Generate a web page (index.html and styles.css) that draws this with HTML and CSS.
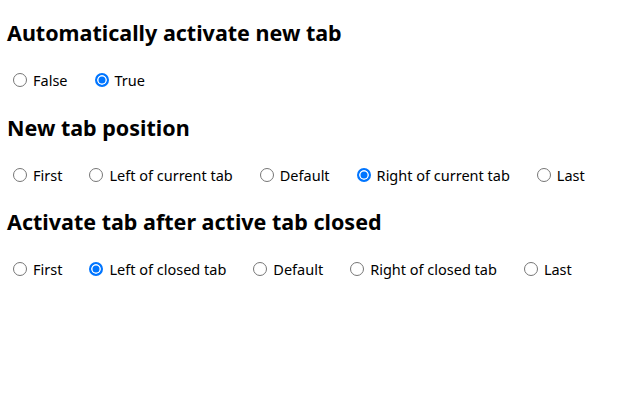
FILE: index.html
```html
<!DOCTYPE html>
<html>
<head>
<meta charset="utf-8">
<link rel="stylesheet" href="styles.css">
</head>
<body>
<main class="page">
  <section class="group">
    <h2 class="title">Automatically activate new tab</h2>
    <div class="options">
      <label class="opt"><input type="radio" name="activate"><span>False</span></label>
      <label class="opt"><input type="radio" name="activate" checked><span>True</span></label>
    </div>
  </section>
  <section class="group">
    <h2 class="title">New tab position</h2>
    <div class="options">
      <label class="opt"><input type="radio" name="pos"><span>First</span></label>
      <label class="opt"><input type="radio" name="pos"><span>Left of current tab</span></label>
      <label class="opt"><input type="radio" name="pos"><span>Default</span></label>
      <label class="opt"><input type="radio" name="pos" checked><span>Right of current tab</span></label>
      <label class="opt"><input type="radio" name="pos"><span>Last</span></label>
    </div>
  </section>
  <section class="group">
    <h2 class="title">Activate tab after active tab closed</h2>
    <div class="options">
      <label class="opt"><input type="radio" name="after"><span>First</span></label>
      <label class="opt"><input type="radio" name="after" checked><span>Left of closed tab</span></label>
      <label class="opt"><input type="radio" name="after"><span>Default</span></label>
      <label class="opt"><input type="radio" name="after"><span>Right of closed tab</span></label>
      <label class="opt"><input type="radio" name="after"><span>Last</span></label>
    </div>
  </section>
</main>
</body>
</html>
```
FILE: styles.css
```css
html, body {
  margin: 0;
  padding: 0;
  background: #ffffff;
}
body {
  font-family: "Noto Sans", "Open Sans", sans-serif;
  color: #000000;
}
.page {
  padding: 18px 0 0 7px;
}
.group {
  height: 94.5px;
}
.title {
  margin: 0;
  font-size: 21.5px;
  font-weight: 700;
  line-height: 30px;
}
.options {
  display: flex;
  align-items: center;
  gap: 27px;
  margin-top: 22px;
  padding-left: 6px;
}
.opt {
  display: flex;
  align-items: center;
  gap: 6px;
  font-size: 14.5px;
  line-height: 20px;
}
.opt input {
  appearance: none;
  -webkit-appearance: none;
  margin: 0;
  width: 14px;
  height: 14px;
  box-sizing: border-box;
  border: 1.5px solid #767676;
  border-radius: 50%;
  background: #ffffff;
  flex: none;
}
.opt input:checked {
  border: 2px solid #0075ff;
  background: #0075ff;
  box-shadow: inset 0 0 0 1.5px #ffffff;
}
```
